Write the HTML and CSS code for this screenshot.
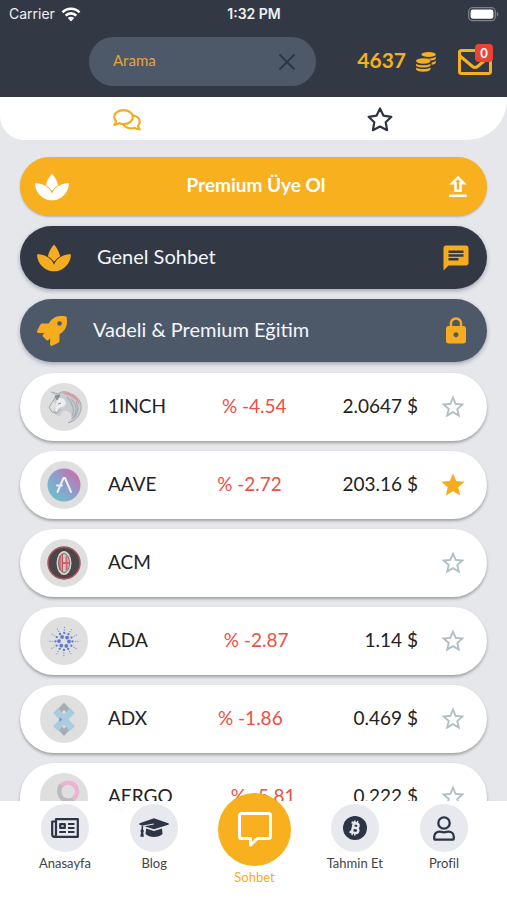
FILE: index.html
```html
<!DOCTYPE html>
<html lang="tr">
<head>
<meta charset="utf-8">
<meta name="viewport" content="width=device-width, initial-scale=1">
<title>Sohbet</title>
<link rel="stylesheet" href="styles.css">
</head>
<body>
<svg class="defs" aria-hidden="true">
  <symbol id="spa" viewBox="0 0 576 512"><path d="M568 192c-29 0-135 6-214 83-33 30-53 63-66 95-13-32-33-65-66-95C143 198 37 192 8 192c-5 0-8 3-8 8 0 28 7 126 89 199 84 82 167 81 199 81s115 1 199-81c82-73 89-171 89-199 0-5-3-8-8-8zM288 322c13-19 28-36 44-51 19-19 40-33 61-45-17-76-60-151-99-192-3-4-9-4-12 0-39 41-82 116-99 192 21 12 42 26 61 45 16 15 31 32 44 51z"/></symbol>
  <symbol id="star-outline" viewBox="0 0 24 24"><path d="M22 9.24l-7.19-.62L12 2 9.19 8.63 2 9.24l5.46 4.73L5.82 21 12 17.27 18.18 21l-1.63-7.03L22 9.24zM12 15.4l-3.76 2.27 1-4.28-3.32-2.88 4.38-.38L12 6.1l1.71 4.04 4.38.38-3.32 2.88 1 4.28L12 15.4z"/></symbol>
  <symbol id="star-full" viewBox="0 0 24 24"><path d="M12 17.27L18.18 21l-1.64-7.03L22 9.24l-7.19-.61L12 2 9.19 8.63 2 9.24l5.46 4.73L5.82 21z"/></symbol>
</svg>

<header class="header">
  <div class="status">
    <div class="carrier">Carrier
      <svg width="20" height="15" viewBox="0 0 20 15" fill="none" stroke="#fff" stroke-width="2.6"><path d="M1.5 5.3a12 12 0 0 1 17 0M4.7 8.6a7.5 7.5 0 0 1 10.6 0"/><path d="M10 14.5L6.8 11a4.6 4.6 0 0 1 6.4 0z" fill="#fff" stroke="none"/></svg>
    </div>
    <time class="clock">1:32 PM</time>
    <div class="battery">
      <svg width="31" height="15" viewBox="0 0 31 15"><rect x=".7" y=".7" width="26.6" height="13" rx="4" fill="none" stroke="#7c828c" stroke-width="1.3"/><rect x="2.6" y="2.6" width="22.8" height="9.2" rx="2.4" fill="#fff"/><path d="M28.8 5v4.6c1-.4 1.5-1.200 1.500-2.300S29.800 5.400 28.800 5z" fill="#7c828c"/></svg>
    </div>
  </div>
  <div class="toolbar">
    <div class="search">
      <input type="text" placeholder="Arama" aria-label="Arama">
      <button type="button" aria-label="Temizle"><svg width="18" height="18" viewBox="0 0 18 18" fill="none" stroke="#2f3642" stroke-width="2"><path d="M1.500 1.500l15 15M16.500 1.500l-15 15"/></svg></button>
    </div>
    <div class="balance"><span>4637</span>
      <svg width="20" height="20" viewBox="0 0 20 20" fill="#f6b01e"><ellipse cx="12.600" cy="2.600" rx="7.200" ry="2.500"/><path d="M19.800 4.500v2.200c-.8 1-2.600 1.600-4.800 1.900-.8-1.100-3-2-5.300-2.100 4 .5 8.700-.2 10.100-2z"/><path d="M19.800 8.700v2.200c-.6.900-2.200 1.500-4.200 1.800V10.500c1.900-.4 3.400-1 4.200-1.800z"/><ellipse cx="7.300" cy="9" rx="7.200" ry="2.700"/><path d="M.1 11.700c3 2 11.400 2 14.400 0v2c-1.800 2.400-12.600 2.400-14.400 0z"/><path d="M.1 15.500c3 2 11.400 2 14.400 0v2c-1.800 3-12.600 3-14.400 0z"/></svg>
    </div>
    <a class="mail" href="#" aria-label="Mesajlar">
      <svg width="34" height="26" viewBox="0 0 34 26" fill="none" stroke="#f6b01e" stroke-width="3" stroke-linejoin="round"><rect x="1.500" y="1.500" width="31" height="23" rx="2"/><path d="M2 7l12.500 10.500c1.600 1.300 3.400 1.300 5 0L32 7"/></svg>
      <span class="badge">0</span>
    </a>
  </div>
</header>

<nav class="tabs" aria-label="Liste">
  <a href="#" aria-label="Sohbetler"><svg width="28" height="22" viewBox="0 0 28 22" fill="none" stroke="#f6ac1f" stroke-width="2.200" stroke-linejoin="round"><path d="M10.500 1.200c5.200 0 9.300 3 9.300 6.900s-4.100 6.900-9.300 6.900c-1.600 0-3-.3-4.300-.8C4.700 15.300 3 15.800 1.300 15.800c.9-1 1.600-2.200 1.800-3.500C1.900 11.100 1.200 9.600 1.200 8.100c0-3.900 4.100-6.900 9.300-6.900z"/><path d="M19.800 6.300c4 .6 7 3.200 7 6.400 0 1.500-.7 2.900-1.800 4 .2 1.300.9 2.600 1.700 3.700-1.700 0-3.400-.6-4.900-1.600-4.600 1.500-9.600.1-11.700-3.300"/></svg></a>
  <a href="#" aria-label="Favoriler"><svg width="26" height="25" viewBox="0 0 26 25" fill="none" stroke="#2d3340" stroke-width="2.200" stroke-linejoin="round"><path d="M13 1.500l3.500 7.200 7.900 1.100-5.700 5.500 1.400 7.900L13 19.500l-7.100 3.700 1.400-7.900-5.700-5.500 7.900-1.100z"/></svg></a>
</nav>

<main class="content">
  <button type="button" class="room premium">
    <svg width="34" height="30"><use href="#spa"/></svg>
    <span>Premium Üye Ol</span>
    <svg width="30" height="30" viewBox="0 0 24 24"><path d="M9 16h6v-6h4l-7-7-7 7h4zm3-10.200L14.200 8H13v6h-2V8H9.800zM5 18h14v2H5z"/></svg>
  </button>
  <a class="room general" href="#">
    <svg width="34" height="30"><use href="#spa"/></svg>
    <span>Genel Sohbet</span>
    <svg width="30" height="30" viewBox="0 0 24 24"><path d="M20 2H4c-1.100 0-2 .9-2 2v18l4-4h14c1.100 0 2-.9 2-2V4c0-1.100-.9-2-2-2zM6 9h12v2H6V9zm8 5H6v-2h8v2zm4-6H6V6h12v2z"/></svg>
  </a>
  <a class="room training" href="#">
    <svg width="30" height="30" viewBox="0 0 512 512"><path d="M505 19c-1-5-7-11-12-12C461 0 436 0 410 0 307 0 245 55 199 128H95c-16 0-36 12-43 26L3 253c-2 3-3 7-3 11a24 24 0 0 0 24 24h104l-23 22c-11 12-13 33 0 46l51 51c11 11 32 13 45 0l23-23v104a24 24 0 0 0 24 24c3 0 8-1 11-3l98-49c15-7 27-26 27-43V313c72-46 128-109 128-211 0-26 0-51-7-83zM384 168a40 40 0 1 1 40-40 40 40 0 0 1-40 40z"/></svg>
    <span>Vadeli &amp; Premium Eğitim</span>
    <svg width="30" height="30" viewBox="0 0 24 24"><path d="M18 8h-1V6c0-2.760-2.240-5-5-5S7 3.240 7 6v2H6c-1.100 0-2 .9-2 2v10c0 1.100.9 2 2 2h12c1.100 0 2-.9 2-2V10c0-1.100-.9-2-2-2zm-6 9c-1.100 0-2-.9-2-2s.9-2 2-2 2 .9 2 2-.9 2-2 2zm3.100-9H8.900V6c0-1.710 1.390-3.100 3.100-3.100s3.100 1.390 3.100 3.100v2z"/></svg>
  </a>

  <ul class="coins">
    <li class="coin">
      <svg class="logo" viewBox="0 0 48 48"><path d="M13 18l3-5-5-4 7 2c3-3 9-3 13 0 7 2 11 9 10 15-1 7-6 12-13 14 3-3 4-6 3-9-2-3-6-4-8-3l-3 5-5-1-2-4 4-6z" fill="#c9ccd0"/><path d="M11 9l7 2c3-3 9-3 13 0 7 2 11 9 10 15-1 7-6 12-13 14M16 13l-3 5-4 6 3 5 5 1 3-4" fill="none" stroke="#a1a6ac"/><path d="M22 10c9-2 17 4 18 13-3-6-8-10-18-13z" fill="#d99aa0"/><path d="M31 16c6 5 7 13 1 20M27 14c6 7 8 14 5 19M36 18c3 6 2 12-2 17" fill="none" stroke="#a9aeb4" stroke-width="1.200"/><path d="M17 16c4-2 8-1 9 4-1 4-4 4-7 5l-2 4-2-2z" fill="#ececee"/><path d="M15 13l5-1-3 5zM18 21l3-1" fill="#8b9097" stroke="#8b9097"/></svg>
      <div class="info"><span>1INCH</span><span class="down">% -4.54</span><span>2.0647 $</span></div>
      <button type="button" class="fav" aria-label="1INCH favori"><svg width="28" height="28"><use href="#star-outline"/></svg></button>
    </li>
    <li class="coin">
      <svg class="logo" viewBox="0 0 48 48"><defs><linearGradient id="aave" x1="0" y1="1" x2="1" y2="0"><stop offset=".15" stop-color="#6fbccb"/><stop offset=".5" stop-color="#8d9fcb"/><stop offset=".85" stop-color="#c273b3"/></linearGradient></defs><circle cx="24" cy="24" r="16.500" fill="url(#aave)"/><path d="M17.500 31l6-14h1.500l6 14M17 24.500h5" fill="none" stroke="#eef0f6" stroke-width="2" stroke-linecap="round" stroke-linejoin="round"/></svg>
      <div class="info"><span>AAVE</span><span class="down">% -2.72</span><span>203.16 $</span></div>
      <button type="button" class="fav active" aria-label="AAVE favori"><svg width="28" height="28"><use href="#star-full"/></svg></button>
    </li>
    <li class="coin">
      <svg class="logo" viewBox="0 0 48 48"><circle cx="24" cy="24" r="16" fill="#4b4647" stroke="#a85561" stroke-width="1.500"/><ellipse cx="24" cy="24" rx="7.500" ry="12" fill="#d6d1ce"/><ellipse cx="24" cy="24" rx="5.500" ry="9.500" fill="#cfc6c5" stroke="#77706f"/><path d="M20 17v14M22.300 15v18" stroke="#bb4e5b" stroke-width="1.300"/><path d="M26.500 17v14M23 24h6" stroke="#d95f6d" stroke-width="1.800"/></svg>
      <div class="info"><span>ACM</span></div>
      <button type="button" class="fav" aria-label="ACM favori"><svg width="28" height="28"><use href="#star-outline"/></svg></button>
    </li>
    <li class="coin">
      <svg class="logo" viewBox="0 0 48 48" fill="none" stroke="#5c78cf" stroke-linecap="round"><circle cx="24" cy="24.500" r="5" stroke-width="3.800" stroke-dasharray="0 5.236"/><circle cx="24" cy="24.500" r="8.500" stroke-width="2.300" stroke-dasharray="0 4.450"/><circle cx="24" cy="24.500" r="11.500" stroke-width="1.300" stroke-dasharray="0 6.021" stroke="#8492c4"/><circle cx="24" cy="24.500" r="14" stroke-width="1.300" stroke-dasharray="0 7.330" stroke="#8a96c4"/></svg>
      <div class="info"><span>ADA</span><span class="down">% -2.87</span><span>1.14 $</span></div>
      <button type="button" class="fav" aria-label="ADA favori"><svg width="28" height="28"><use href="#star-outline"/></svg></button>
    </li>
    <li class="coin">
      <svg class="logo" viewBox="0 0 48 48"><path d="M24 7.500l6 6.500-3.500 3.500L24 15l-2.500 2.500L18 14zM24 41l-6-6.500 3.500-3.500L24 33.500l2.500-2.500 3.500 3.500z" fill="#a9adb0"/><path d="M18 13l6 6 6-6 5 5-6.500 6.500L35 31l-5 5-6-6-6 6-5-5 6.500-6.500L13 18z" fill="#abcbe0"/><path d="M19.500 22.500l2.500 2-2.500 2.500z" fill="#718ca3"/></svg>
      <div class="info"><span>ADX</span><span class="down">% -1.86</span><span>0.469 $</span></div>
      <button type="button" class="fav" aria-label="ADX favori"><svg width="28" height="28"><use href="#star-outline"/></svg></button>
    </li>
    <li class="coin">
      <svg class="logo" viewBox="0 0 48 48" fill="none" stroke-width="4.500"><path d="M21 13c4-5 12-4 15 1 2 4 1 9-3 12" stroke="#eab4d2"/><path d="M21 12c-3 5-2 13 4 15 3 1 6 1 8-1" stroke="#bcbcbe"/></svg>
      <div class="info"><span>AERGO</span><span class="down">% -5.81</span><span>0.222 $</span></div>
      <button type="button" class="fav" aria-label="AERGO favori"><svg width="28" height="28"><use href="#star-outline"/></svg></button>
    </li>
  </ul>
</main>

<nav class="bottom" aria-label="Menü">
  <a href="#"><span class="disc"><svg width="28" height="20" viewBox="0 0 28 20" fill="none" stroke="#2d3446" stroke-width="2.200" stroke-linejoin="round"><path d="M5 1.200h21.800v17.600H3.500a2.300 2.300 0 0 1-2.300-2.300V3.500H5zM5 3v13.500c0 1.300-.5 2-1.500 2.300"/><path d="M9.200 6.100h4.600v3.800H9.200z"/><path d="M17 6h6.500M17 10h6.500M8.200 14h6.700M17 14h6.500" stroke-width="2"/></svg></span>Anasayfa</a>
  <a href="#"><span class="disc"><svg width="30" height="20" viewBox="0 0 30 20" fill="#2d3446"><path d="M15 .3l14.300 4.900c.7.300.7 1.200 0 1.500L15 11.300 5.500 8.200 15 6.600l-.2-1L3.800 7.500.7 6.700c-.7-.3-.7-1.200 0-1.500z"/><path d="M2.700 7.300l1.500.6-.3 4.600 1 6.300H1.300l1.100-6.200z"/><circle cx="3.200" cy="13" r="1.700"/><path d="M7.200 10.500l7.800 2.600 8-2.600.5 5.500c-4 4-13 4-17 0z"/></svg></span>Blog</a>
  <a href="#" class="current"><span class="disc"><svg width="34" height="35" viewBox="0 0 34 35" fill="none" stroke="#fff" stroke-width="3" stroke-linejoin="round"><path d="M3.500 1.500h27a2 2 0 0 1 2 2v21a2 2 0 0 1-2 2H19.500L12.500 33v-6.500h-9a2 2 0 0 1-2-2v-21a2 2 0 0 1 2-2z"/></svg></span>Sohbet</a>
  <a href="#"><span class="disc"><svg width="24" height="24" viewBox="0 0 24 24"><circle cx="12" cy="12" r="12" fill="#2d3446"/><g transform="rotate(12 12 12)" fill="none" stroke="#e7e9ee" stroke-width="2.400"><path d="M7.500 7.200h5.300c3 0 3 4.600 0 4.600H9.800h3.400c3.500 0 3.500 5 0 5H7.500M9.800 7v10"/><path d="M10.500 4.500v2.600M13.200 4.500v2.600M10.500 17v2.600M13.200 17v2.600" stroke-width="1.400"/></g></svg></span>Tahmin Et</a>
  <a href="#"><span class="disc"><svg width="22" height="25" viewBox="0 0 22 25" fill="none" stroke="#2d3446" stroke-width="2.300" stroke-linejoin="round"><circle cx="11" cy="7" r="5.700"/><path d="M6.500 15.600c1.500 0 2.500.7 4.500.7s3-.7 4.500-.7c3 0 5.300 2.300 5.300 5.300v1c0 .9-.7 1.700-1.700 1.700H2.900c-1 0-1.700-.8-1.700-1.700v-1c0-3 2.300-5.300 5.300-5.300z"/></svg></span>Profil</a>
</nav>
</body>
</html>
```
FILE: styles.css
```css
* {
  box-sizing: border-box;
}

body {
  display: flex;
  flex-direction: column;
  height: 100vh;
  margin: 0;
  overflow: hidden;
  background: #e6e7eb;
  color: #222;
  font-family: Lato, "Liberation Sans", sans-serif;
}

a {
  color: inherit;
  text-decoration: none;
}

button {
  padding: 0;
  border: 0;
  background: none;
  color: inherit;
  font: inherit;
}

svg {
  display: block;
  flex: none;
}

.defs {
  position: absolute;
  width: 0;
  height: 0;
}

.header {
  flex: none;
  padding-bottom: 11px;
  background: #323945;
}

.status {
  display: grid;
  grid-template-columns: 1fr auto 1fr;
  align-items: center;
  height: 28px;
  padding: 0 8px 0 9px;
  color: #eff0f2;
  font: 14px/28px Inter, sans-serif;
}

.carrier {
  display: flex;
  align-items: center;
  gap: 6px;
}

.clock {
  font-weight: 600;
}

.battery {
  justify-self: end;
}

.toolbar {
  display: flex;
  align-items: center;
  margin-top: 9px;
  padding: 0 15px 0 89px;
}

.search {
  display: flex;
  flex: 1;
  align-items: center;
  min-width: 0;
  height: 49px;
  padding: 0 20px 0 24px;
  border-radius: 25px;
  background: #4d5869;
}

.search input {
  flex: 1;
  min-width: 0;
  padding: 0 0 3px;
  border: 0;
  outline: 0;
  background: none;
  color: #e3a535;
  font: 15px/20px Lato, sans-serif;
}

.search input::placeholder {
  color: #e3a535;
  opacity: 1;
}

.balance {
  display: flex;
  align-items: center;
  gap: 10px;
  margin: 0 22px 0 41px;
  color: #f6b01e;
  font-size: 21px;
  font-weight: 700;
  line-height: 28px;
}

.balance span {
  padding-bottom: 3px;
}

.mail {
  position: relative;
}

.badge {
  position: absolute;
  top: -5px;
  right: -1px;
  width: 18px;
  border-radius: 4px;
  background: #ea4335;
  color: #fff;
  font-size: 13px;
  font-weight: 700;
  line-height: 18px;
  text-align: center;
}

.tabs {
  display: flex;
  flex: none;
  height: 43px;
  border-radius: 0 0 40px 24px;
  background: #fff;
}

.tabs a {
  display: flex;
  flex: 1;
  align-items: center;
  justify-content: center;
  padding-top: 2px;
}

.content {
  display: flex;
  flex: 1;
  flex-direction: column;
  gap: 10px;
  min-height: 0;
  padding: 17px 20px 0;
  overflow: hidden;
}

.room {
  display: flex;
  flex: none;
  align-items: center;
  gap: 26px;
  height: 63px;
  padding: 0 16px 0 17px;
  border-radius: 32px;
  box-shadow: 0 2px 4px rgba(40, 50, 80, 0.35);
  color: #f4f6fb;
  font-size: 20px;
  line-height: 24px;
}

.room svg {
  fill: #f6ac1f;
}

.room span {
  flex: 1;
  padding-bottom: 3px;
}

.premium {
  height: 59px;
  padding: 0 14px 0 15px;
  background: #f8b01e;
  box-shadow: 0 1px 2px rgba(40, 50, 80, 0.3);
  color: #fff;
  font-size: 19px;
  font-weight: 700;
}

.premium svg {
  fill: #fff;
}

.general {
  background: #323945;
}

.training {
  background: #4d5869;
}

.coins {
  display: flex;
  flex-direction: column;
  gap: 10px;
  margin: 1px 0 0;
  padding: 0;
  list-style: none;
}

.coin {
  display: flex;
  flex: none;
  align-items: center;
  height: 68px;
  padding: 0 20px;
  border-radius: 34px;
  background: #fff;
  box-shadow: 0 2px 3px rgba(0, 0, 0, 0.3);
}

.logo {
  width: 48px;
  height: 48px;
  border-radius: 50%;
  background: #dfdfdf;
}

.info {
  display: flex;
  flex: 1;
  justify-content: space-between;
  margin: 0 21px 0 20px;
  padding-bottom: 3px;
  font-size: 19px;
  line-height: 24px;
}

.down {
  color: #ee4e44;
}

.fav svg {
  fill: #b0bfc6;
}

.fav.active svg {
  fill: #f6ac1f;
}

.bottom {
  position: relative;
  display: flex;
  flex: none;
  justify-content: space-between;
  height: 99px;
  padding: 3px 39px 0 41px;
  background: #fff;
}

.bottom a {
  display: flex;
  flex-direction: column;
  align-items: center;
  gap: 2px;
  width: 48px;
  color: #444;
  font-size: 13px;
  line-height: 18px;
  white-space: nowrap;
}

.disc {
  display: flex;
  flex: none;
  align-items: center;
  justify-content: center;
  width: 48px;
  height: 48px;
  border-radius: 50%;
  background: #e7e9ee;
}

.bottom .current {
  width: 70px;
  margin-top: -11px;
  color: #f6ac1f;
}

.current .disc {
  width: 73px;
  height: 73px;
  background: #f8b01e;
}
```
